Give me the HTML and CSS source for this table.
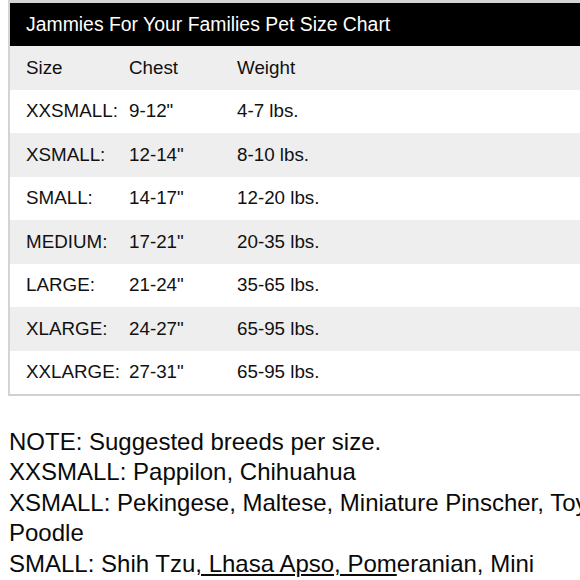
FILE: index.html
```html
<!DOCTYPE html>
<html>
<head>
<meta charset="utf-8">
<link rel="stylesheet" href="styles.css">
</head>
<body>
<div class="page">
  <div class="chart">
    <div class="title">Jammies For Your Families Pet Size Chart</div>
    <div class="row shade"><span>Size</span><span>Chest</span><span>Weight</span></div>
    <div class="row"><span>XXSMALL:</span><span>9-12"</span><span>4-7 lbs.</span></div>
    <div class="row shade"><span>XSMALL:</span><span>12-14"</span><span>8-10 lbs.</span></div>
    <div class="row"><span>SMALL:</span><span>14-17"</span><span>12-20 lbs.</span></div>
    <div class="row shade"><span>MEDIUM:</span><span>17-21"</span><span>20-35 lbs.</span></div>
    <div class="row"><span>LARGE:</span><span>21-24"</span><span>35-65 lbs.</span></div>
    <div class="row shade"><span>XLARGE:</span><span>24-27"</span><span>65-95 lbs.</span></div>
    <div class="row"><span>XXLARGE:</span><span>27-31"</span><span>65-95 lbs.</span></div>
  </div>
  <div class="note">
    NOTE: Suggested breeds per size.<br>
    XXSMALL: Pappilon, Chihuahua<br>
    XSMALL: Pekingese, Maltese, Miniature Pinscher, Toy Poodle<br>
    SMALL: Shih Tzu<span class="ul">, Lhasa Apso, Pom</span>eranian, Mini Poodle
  </div>
</div>
</body>
</html>
```
FILE: styles.css
```css
html, body {
  margin: 0;
  padding: 0;
  background: #fff;
  overflow: hidden;
}
body {
  width: 580px;
  height: 580px;
  font-family: "Liberation Sans", Arial, sans-serif;
  color: #111;
}
.page {
  width: 640px;
}
.chart {
  margin-left: 8px;
  border-top: 3px solid #d4d4d4;
  border-left: 2px solid #d4d4d4;
  border-bottom: 2px solid #d0d0d0;
}
.title {
  background: #000;
  color: #fff;
  height: 43px;
  display: flex;
  align-items: center;
  padding-left: 16px;
  font-size: 19.4px;
}
.row {
  display: grid;
  grid-template-columns: 103px 108px 1fr;
  align-items: center;
  height: 43.5px;
  padding-left: 16px;
  font-size: 18.8px;
  background: #fff;
}
.row.shade {
  background: #eeeeee;
}
.note {
  width: 596px;
  margin: 31px 0 0 9px;
  font-size: 24px;
  line-height: 30.4px;
  color: #0a0a0a;
}
.ul {
  text-decoration: underline;
  text-decoration-thickness: 2px;
  text-underline-offset: 2px;
}
```
